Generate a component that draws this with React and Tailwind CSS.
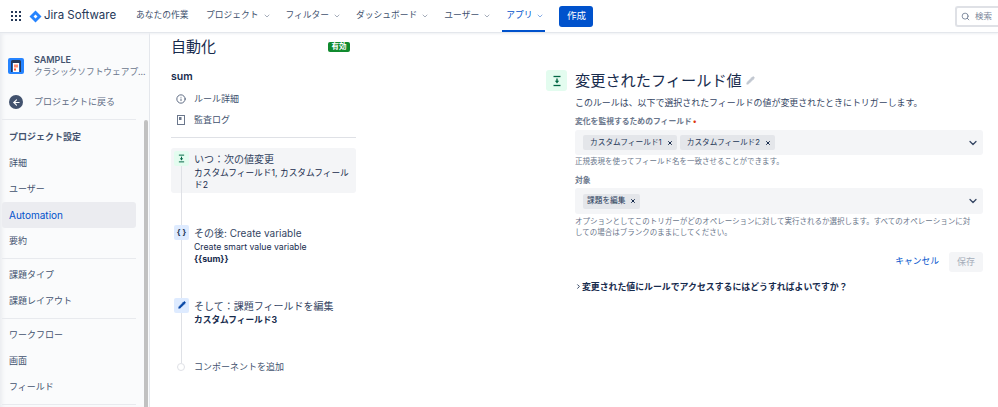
import React from "react";
import { ChevronDown, Search, X, Info, Pencil, ChevronRight, ArrowLeft } from "lucide-react";

const FONT = 'font-["Inter","Noto_Sans_CJK_JP",sans-serif]';

function NavItem({ children, chevron, active, first }) {
  return (
    <div className={`relative h-full flex items-center pl-[4px] text-[8.75px] whitespace-nowrap ${first ? "mr-[9.5px] pr-[4px]" : "mr-[7px]"} ${chevron && !active ? "pr-[4px]" : ""} ${active ? "pr-[1px] text-[#0052cc]" : "text-[#42526e]"}`}>
      <span>{children}</span>
      {chevron && <ChevronDown size={8} strokeWidth={2} className="ml-[4px] opacity-70" />}
      {active && <span className="absolute left-0 right-0 bottom-0 h-[2px] bg-[#0052cc]" />}
    </div>
  );
}

function Header() {
  return (
    <header className="h-[33px] shrink-0 flex items-center bg-white border-b border-[#e4e7ec] shadow-[0_1px_2px_#eef0f3] relative z-10">
      <div className="ml-[11px] grid grid-cols-3 gap-[2px] w-[10px] shrink-0">
        {Array.from({ length: 9 }).map((_, i) => (
          <span key={i} className="w-[2px] h-[2px] bg-[#253858]" />
        ))}
      </div>
      <svg width="13" height="13" viewBox="0 0 13 13" className="ml-[8px] shrink-0">
        <path d="M6.5 0.5 L12.5 6.5 L6.5 12.5 L0.5 6.5 Z" fill="#2684ff" />
        <path d="M6.5 4.5 L8.5 6.5 L6.5 8.5 L4.5 6.5 Z" fill="#ffffff" />
      </svg>
      <span className="ml-[2px] text-[11.5px] text-[#253858] w-[88px] shrink-0 whitespace-nowrap">Jira Software</span>
      <div className="flex items-center h-full">
        <NavItem first>あなたの作業</NavItem>
        <NavItem chevron>プロジェクト</NavItem>
        <NavItem chevron>フィルター</NavItem>
        <NavItem chevron>ダッシュボード</NavItem>
        <NavItem chevron>ユーザー</NavItem>
        <NavItem chevron active>アプリ</NavItem>
      </div>
      <button className="ml-[7px] w-[34px] h-[21px] rounded-[3px] bg-[#0052cc] text-white text-[9.5px] flex items-center justify-center shrink-0">
        作成
      </button>
      <div className="ml-auto w-[43px] h-[21px] rounded-l-[3px] border-2 border-r-0 border-[#dfe1e6] flex items-center pl-[4px] shrink-0">
        <Search size={9} className="text-[#5e6c84]" />
        <span className="ml-[5px] text-[8.5px] text-[#7a869a] whitespace-nowrap">検索</span>
      </div>
    </header>
  );
}

function SideItem({ children, active }) {
  return (
    <div className={`h-[26px] mx-[2px] flex items-center pl-[7px] rounded-[3px] ${active ? "bg-[#ebecf0] text-[#0052cc] text-[10px]" : "text-[#42526e] text-[9px]"}`}>
      {children}
    </div>
  );
}

function Divider() {
  return <div className="h-[1px] mx-[2px] my-[3.5px] bg-[#e8eaee]" />;
}

function Sidebar() {
  return (
    <aside className="w-[150px] shrink-0 h-full bg-[#fafbfc] border-r border-[#e4e7ec] shadow-[inset_4px_0_4px_-2px_#e9ebef] flex relative overflow-hidden">
      <div className="w-[138px] shrink-0 pt-[18px]">
        <div className="flex items-center pl-[8px] h-[30px]">
          <svg width="16" height="16" viewBox="0 0 16 16" className="shrink-0">
            <rect width="16" height="16" rx="2" fill="#2684ff" />
            <path d="M3 14V3.5Q3 2 4.5 2H11.5Q13 2 13 3.5V14H11.5V5H4.5V14Z" fill="#253858" />
            <rect x="5" y="5" width="6" height="9" fill="#ffffff" />
            <rect x="6" y="6.5" width="4" height="3" fill="#ff8f73" />
            <rect x="6" y="10.5" width="2" height="2" fill="#ff5630" />
          </svg>
          <div className="ml-[10px] min-w-0 leading-[12px]">
            <div className="text-[9px] font-semibold text-[#42526e] leading-[12px]">SAMPLE</div>
            <div className="text-[8.7px] text-[#6b778c] whitespace-nowrap leading-[12px]">クラシックソフトウェアプ...</div>
          </div>
        </div>
        <div className="flex items-center pl-[9px] mt-[11px] h-[20px]">
          <span className="w-[14px] h-[14px] rounded-full bg-[#42526e] flex items-center justify-center">
            <ArrowLeft size={9} strokeWidth={3} className="text-white" />
          </span>
          <span className="ml-[11px] text-[9px] text-[#5e6c84]">プロジェクトに戻る</span>
        </div>
        <div className="h-[1px] mx-[2px] mt-[7px] bg-[#e8eaee]" />
        <div className="h-[26px] flex items-center pl-[9px] mt-[4px] text-[9px] font-bold text-[#42526e]">プロジェクト設定</div>
        <SideItem>詳細</SideItem>
        <SideItem>ユーザー</SideItem>
        <SideItem active>Automation</SideItem>
        <SideItem>要約</SideItem>
        <Divider />
        <SideItem>課題タイプ</SideItem>
        <SideItem>課題レイアウト</SideItem>
        <Divider />
        <SideItem>ワークフロー</SideItem>
        <SideItem>画面</SideItem>
        <SideItem>フィールド</SideItem>
        <Divider />
      </div>
      <div className="ml-[5.5px] w-[4px] mt-[87px] h-full bg-[#c1c1c1] rounded-t-[2px]" />
    </aside>
  );
}

function Step({ icon, iconBg, title, children, highlight, className = "" }) {
  return (
    <div className={`relative flex rounded-[3px] ${highlight ? "bg-[#f4f5f7]" : ""} ${className}`}>
      <span className={`absolute z-10 left-[3px] top-[3px] w-[15px] h-[15px] rounded-[2px] flex items-center justify-center ${iconBg}`}>
        {icon}
      </span>
      <div className="pl-[23px] pr-[3px] pt-[3px] pb-[2px]">
        <div className="text-[10px] leading-[16px] text-[#344563] whitespace-nowrap">{title}</div>
        <div className="text-[8.7px] leading-[12px] text-[#172b4d]">{children}</div>
      </div>
    </div>
  );
}

function TriggerIcon({ size = 11, color = "#006644" }) {
  return (
    <svg width={size} height={size} viewBox="0 0 12 12" fill="none" stroke={color}>
      <path d="M2.5 1.5H9.5" strokeWidth="1.3" />
      <path d="M2.5 10.5H9.5" strokeWidth="1.3" />
      <path d="M6 3.5V6.5" strokeWidth="1.4" />
      <path d="M3.8 5.8H8.2L6 8.6Z" fill={color} stroke="none" />
    </svg>
  );
}

function AuditIcon() {
  return (
    <svg width="10" height="10" viewBox="0 0 10 10" fill="none" stroke="#6b778c">
      <rect x="1.5" y="0.5" width="7" height="9" />
      <rect x="3" y="2" width="2.5" height="3" fill="#6b778c" stroke="none" />
    </svg>
  );
}

function RuleColumn() {
  return (
    <section className="w-[185px] shrink-0 ml-[21px]">
      <div className="flex items-center h-[28px]">
        <h1 className="text-[15px] leading-[28px] text-[#172b4d]">自動化</h1>
        <span className="ml-auto mr-[6px] h-[10px] w-[22px] rounded-[2px] bg-[#108a2e] text-white text-[7.5px] font-bold leading-[10px] text-center">有効</span>
      </div>
      <div className="text-[10.5px] font-semibold text-[#172b4d] mt-[8px] leading-[16px]">sum</div>
      <div className="flex items-center h-[21px] mt-[3.5px] pl-[5px] text-[9px] text-[#42526e]">
        <Info size={10} className="text-[#42526e]" />
        <span className="ml-[8px]">ルール詳細</span>
      </div>
      <div className="flex items-center h-[21px] pl-[5px] text-[9px] text-[#42526e]">
        <AuditIcon />
        <span className="ml-[8px]">監査ログ</span>
      </div>
      <div className="h-[1px] bg-[#dfe1e6] mt-[6px]" />
      <div className="relative mt-[10px]">
        <Step
          highlight
          iconBg="bg-[#e3fcef]"
          icon={<TriggerIcon size={9} />}
          title="いつ：次の値変更"
        >
          カスタムフィールド1, カスタムフィール<br />ド2
        </Step>
        <Step
          className="mt-[29px]"
          iconBg="bg-[#deebff]"
          icon={<span className="text-[8px] font-bold leading-none text-[#253858]">{"{ }"}</span>}
          title="その後: Create variable"
        >
          Create smart value variable
          <br />
          <b className="font-bold">{"{{sum}}"}</b>
        </Step>
        <Step
          className="mt-[28px]"
          iconBg="bg-[#deebff]"
          icon={<Pencil size={8} fill="#0747a6" stroke="#0747a6" />}
          title="そして：課題フィールドを編集"
        >
          <b className="font-bold">カスタムフィールド3</b>
        </Step>
        <div className="relative flex items-center mt-[31px] h-[16px] pl-[23px] text-[9px] text-[#42526e]">
          <span className="absolute z-10 left-[6px] top-[4px] w-[8px] h-[8px] rounded-full bg-white border border-[#dfe1e6]" />
          コンポーネントを追加
        </div>
        <div className="absolute z-[5] left-[9.5px] top-[10px] h-[205px] w-[1.5px] bg-[#dfe1e6]" />
      </div>
    </section>
  );
}

function Tag({ children, pad = "pl-[7px]" }) {
  return (
    <span className={`h-[15px] flex items-center rounded-[2px] bg-[#e4e6ea] ${pad} pr-[4px] text-[7.7px] text-[#253858] whitespace-nowrap`}>
      {children}
      <X size={6} strokeWidth={4} className="ml-[5px] text-[#172b4d]" />
    </span>
  );
}

function SelectBox({ children, h = "h-[26px]" }) {
  return (
    <div className={`${h} rounded-[3px] bg-[#f4f5f7] flex items-center pl-[8px] pr-[4px] gap-[3px]`}>
      {children}
      <ChevronDown size={12} strokeWidth={2.5} className="ml-auto text-[#344563]" />
    </div>
  );
}

function Config() {
  return (
    <section className="w-[408px] shrink-0 ml-[219px] pt-[37px]">
      <div className="flex items-center -ml-[29px]">
        <span className="w-[21px] h-[21px] rounded-[3px] bg-[#e3fcef] flex items-center justify-center">
          <TriggerIcon size={12} />
        </span>
        <h2 className="ml-[8px] text-[15.2px] leading-[21px] text-[#172b4d]">変更されたフィールド値</h2>
        <Pencil size={9} fill="#c1c7d0" stroke="#c1c7d0" className="ml-[4px]" />
      </div>
      <p className="text-[8.95px] leading-[12px] text-[#344563] mt-[6px] whitespace-nowrap">
        このルールは、以下で選択されたフィールドの値が変更されたときにトリガーします。
      </p>
      <div className="text-[7.8px] font-semibold leading-[12px] text-[#6b778c] mt-[6px]">
        変化を監視するためのフィールド<span className="text-[#de350b] ml-[1px]">•</span>
      </div>
      <div className="mt-[3px]">
        <SelectBox h="h-[25px]">
          <Tag>カスタムフィールド1</Tag>
          <Tag>カスタムフィールド2</Tag>
        </SelectBox>
      </div>
      <p className="text-[7.5px] leading-[12px] text-[#6b778c] mt-[1px] whitespace-nowrap">正規表現を使ってフィールド名を一致させることができます。</p>
      <div className="text-[7.8px] font-semibold leading-[12px] text-[#6b778c] mt-[6px]">対象</div>
      <div className="mt-[2px]">
        <SelectBox>
          <Tag pad="pl-[4px]">課題を編集</Tag>
        </SelectBox>
      </div>
      <p className="text-[7.5px] leading-[11px] text-[#6b778c] mt-[1.5px] whitespace-nowrap">
        オプションとしてこのトリガーがどのオペレーションに対して実行されるか選択します。すべてのオペレーションに対
        <br />
        しての場合はブランクのままにしてください。
      </p>
      <div className="flex items-center justify-end mt-[14px]">
        <span className="text-[8.75px] text-[#0052cc] mr-[10px]">キャンセル</span>
        <span className="w-[34px] h-[20px] rounded-[3px] bg-[#f4f5f7] text-[#a5adba] text-[9px] flex items-center justify-center">保存</span>
      </div>
      <div className="flex items-center mt-[7px] h-[16px]">
        <ChevronRight size={7} strokeWidth={3} className="text-[#172b4d]" />
        <span className="text-[8.9px] font-bold text-[#172b4d] whitespace-nowrap">変更された値にルールでアクセスするにはどうすればよいですか？</span>
      </div>
    </section>
  );
}

export default function App() {
  return (
    <div className={`w-[998px] h-[407px] overflow-hidden flex flex-col bg-white ${FONT}`}>
      <Header />
      <div className="flex flex-1 min-h-0">
        <Sidebar />
        <RuleColumn />
        <Config />
      </div>
    </div>
  );
}
